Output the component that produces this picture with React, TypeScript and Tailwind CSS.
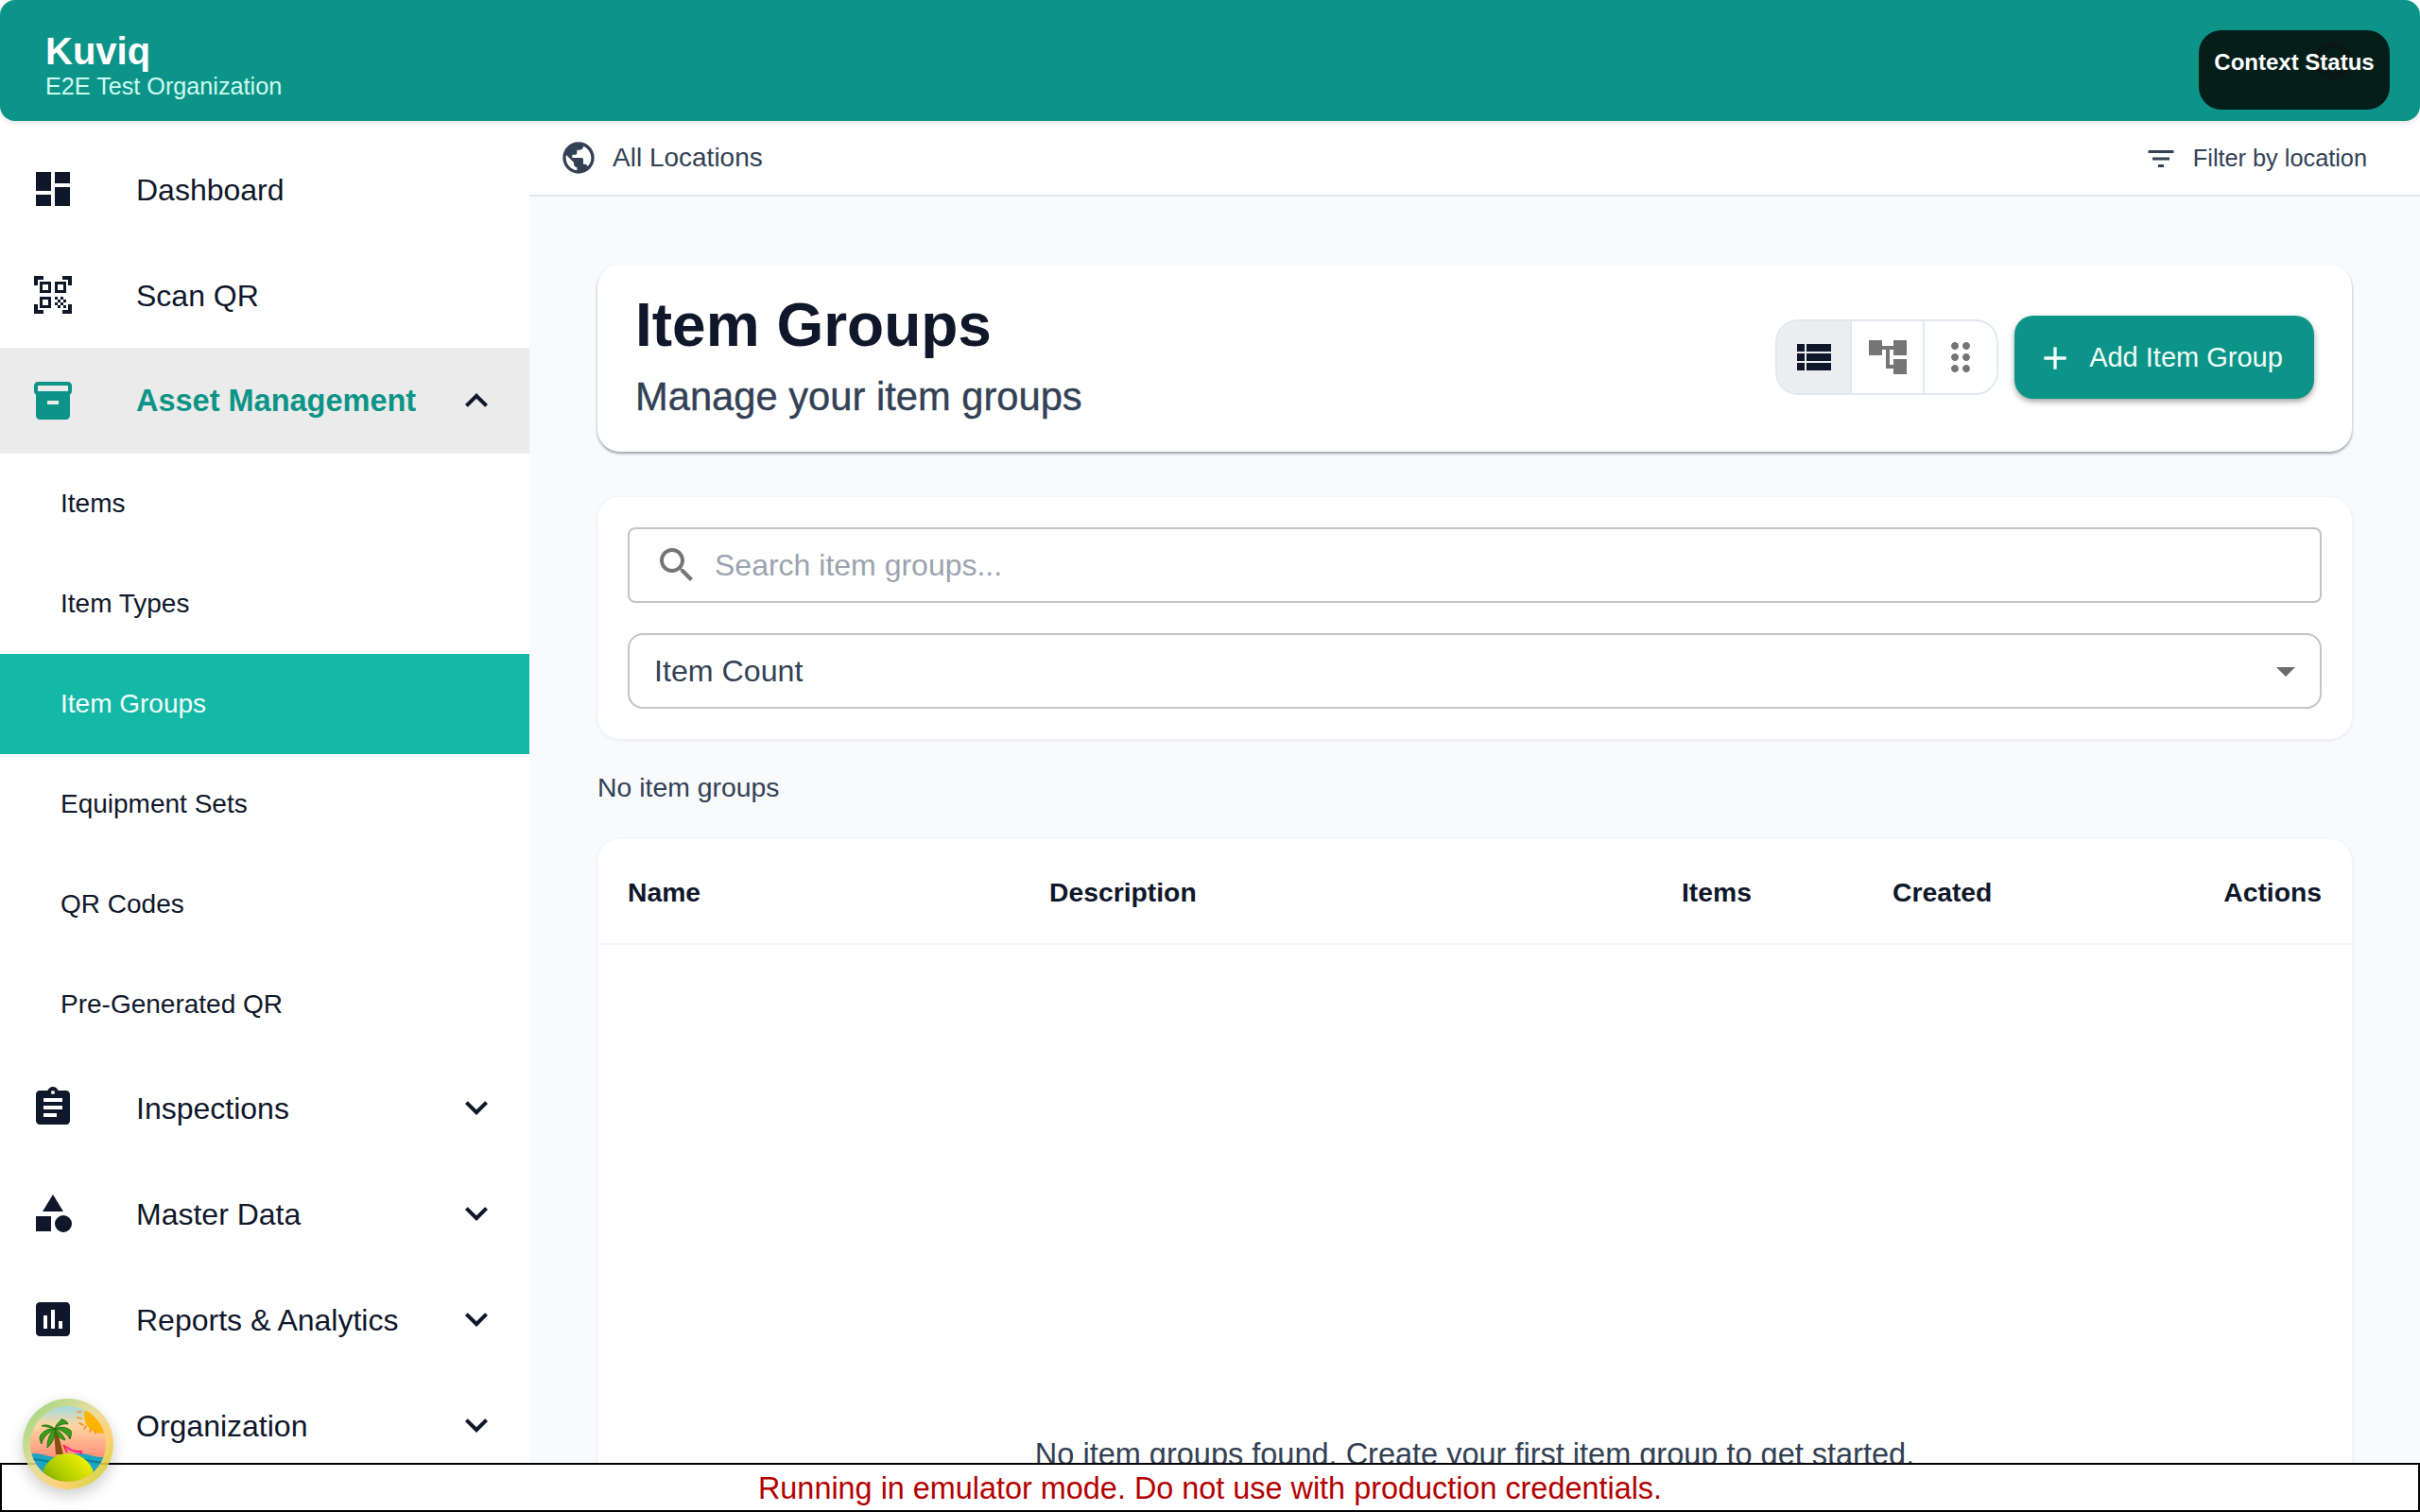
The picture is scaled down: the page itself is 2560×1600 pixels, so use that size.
const paths = {
  dashboard: 'M3 13h8V3H3v10zm0 8h8v-6H3v6zm10 0h8V11h-8v10zm0-18v6h8V3h-8z',
  qr: 'M9.5 6.5v3h-3v-3h3M11 5H5v6h6V5zm-1.5 9.5v3h-3v-3h3M11 13H5v6h6v-6zm6.5-6.5v3h-3v-3h3M19 5h-6v6h6V5zm-6 8h1.5v1.5H13V13zm1.5 1.5H16V16h-1.5v-1.5zM16 13h1.5v1.5H16V13zm-3 3h1.5v1.5H13V16zm1.5 1.5H16V19h-1.5v-1.5zM16 16h1.5v1.5H16V16zm1.5-1.5H19V16h-1.5v-1.5zm0 3H19V19h-1.5v-1.5zM22 7h-2V4h-3V2h5v5zm0 15v-5h-2v3h-3v2h5zM2 22h5v-2H4v-3H2v5zM2 2v5h2V4h3V2H2z',
  inventory: 'M20 2H4c-1 0-2 .9-2 2v3.01c0 .72.43 1.34 1 1.69V20c0 1.1 1.1 2 2 2h14c.9 0 2-.9 2-2V8.7c.57-.35 1-.97 1-1.69V4c0-1.1-1-2-2-2zm-5 12H9v-2h6v2zm5-7H4V4h16v3z',
  assignment: 'M19 3h-4.18C14.4 1.84 13.3 1 12 1c-1.3 0-2.4.84-2.82 2H5c-1.1 0-2 .9-2 2v14c0 1.1.9 2 2 2h14c1.1 0 2-.9 2-2V5c0-1.1-.9-2-2-2zm-7 0c.55 0 1 .45 1 1s-.45 1-1 1-1-.45-1-1 .45-1 1-1zm2 14H7v-2h7v2zm3-4H7v-2h10v2zm0-4H7V7h10v2z',
  category: 'M12 2l-5.5 9h11zM17.5 13a4.5 4.5 0 1 0 0 9 4.5 4.5 0 0 0 0-9zM3 13.5h8v8H3z',
  assessment: 'M19 3H5c-1.1 0-2 .9-2 2v14c0 1.1.9 2 2 2h14c1.1 0 2-.9 2-2V5c0-1.1-.9-2-2-2zM9 17H7v-7h2v7zm4 0h-2V7h2v10zm4 0h-2v-4h2v4z',
  less: 'M12 8l-6 6 1.41 1.41L12 10.83l4.59 4.58L18 14z',
  more: 'M16.59 8.59L12 13.17 7.41 8.59 6 10l6 6 6-6z',
  globe: 'M12 2C6.48 2 2 6.48 2 12s4.48 10 10 10 10-4.48 10-10S17.52 2 12 2zm-1 17.93c-3.95-.49-7-3.85-7-7.93 0-.62.08-1.21.21-1.79L9 15v1c0 1.1.9 2 2 2v1.93zm6.9-2.54c-.26-.81-1-1.39-1.9-1.39h-1v-3c0-.55-.45-1-1-1H8v-2h2c.55 0 1-.45 1-1V7h2c1.1 0 2-.9 2-2v-.41c2.93 1.19 5 4.06 5 7.41 0 2.08-.8 3.97-2.1 5.39z',
  filter: 'M10 18h4v-2h-4v2zM3 6v2h18V6H3zm3 7h12v-2H6v2z',
  list: 'M3 14h4v-4H3v4zm0 5h4v-4H3v4zM3 9h4V5H3v4zm5 5h13v-4H8v4zm0 5h13v-4H8v4zM8 5v4h13V5H8z',
  tree: 'M22 11V3h-7v3H9V3H2v8h7V8h2v10h4v3h7v-8h-7v3h-2V8h2v3z',
  drag: 'M11 18c0 1.1-.9 2-2 2s-2-.9-2-2 .9-2 2-2 2 .9 2 2zm-2-8c-1.1 0-2 .9-2 2s.9 2 2 2 2-.9 2-2-.9-2-2-2zm0-6c-1.1 0-2 .9-2 2s.9 2 2 2 2-.9 2-2-.9-2-2-2zm6 4c1.1 0 2-.9 2-2s-.9-2-2-2-2 .9-2 2 .9 2 2 2zm0 2c-1.1 0-2 .9-2 2s.9 2 2 2 2-.9 2-2-.9-2-2-2zm0 6c-1.1 0-2 .9-2 2s.9 2 2 2 2-.9 2-2-.9-2-2-2z',
  plus: 'M19 13h-6v6h-2v-6H5v-2h6V5h2v6h6v2z',
  search: 'M15.5 14h-.79l-.28-.27C15.41 12.59 16 11.11 16 9.5 16 5.91 13.09 3 9.5 3S3 5.91 3 9.5 5.91 16 9.5 16c1.61 0 3.09-.59 4.23-1.57l.27.28v.79l5 4.99L20.49 19l-4.99-5zm-6 0C7.01 14 5 11.99 5 9.5S7.01 5 9.5 5 14 7.01 14 9.5 11.99 14 9.5 14z',
  arrow: 'M7 10l5 5 5-5z',
};

function Icon({ d, className }: { d: string; className: string }) {
  return (
    <svg viewBox="0 0 24 24" fill="currentColor" className={`shrink-0 ${className}`}>
      <path d={d} />
    </svg>
  );
}

function NavItem({ icon, label, chevron, active }: { icon?: string; label: string; chevron?: string; active?: boolean }) {
  return (
    <div className={`flex h-[112px] items-center pl-[32px] pr-[32px] ${active ? 'bg-[#ebebeb]' : ''}`}>
      {/* the Organization icon sits under the avatar, so it only holds the space */}
      {icon ? (
        <Icon d={icon} className={`h-[48px] w-[48px] ${active ? 'text-[#0d9488]' : 'text-[#0f172a]'}`} />
      ) : (
        <div className="h-[48px] w-[48px] shrink-0" />
      )}
      <span className={`ml-[64px] flex-1 pt-[1px] ${active ? 'text-[32.5px] font-bold text-[#0d9488]' : 'text-[32px] text-[#0f172a]'}`}>{label}</span>
      {chevron && <Icon d={chevron} className="h-[48px] w-[48px] text-[#0f172a]" />}
    </div>
  );
}

function SubItem({ label, active }: { label: string; active?: boolean }) {
  return (
    <div className={`flex h-[106px] items-center pl-[64px] text-[28px] ${active ? 'bg-[#14b8a6] text-[#f0fdfa]' : 'text-[#0f172a]'}`}>
      {label}
    </div>
  );
}

function Avatar() {
  return (
    <div className="fixed bottom-[24px] left-[24px] h-[96px] w-[96px] rounded-full shadow-[0_6px_16px_rgba(0,0,0,0.2)]">
      <svg viewBox="0 0 96 96" className="h-full w-full">
        <defs>
          <linearGradient id="ring" x1="0" y1="0" x2="1" y2="1">
            <stop offset="0" stopColor="#7fd06a" />
            <stop offset="0.45" stopColor="#e6d890" />
            <stop offset="0.7" stopColor="#ffc860" />
            <stop offset="1" stopColor="#a6d810" />
          </linearGradient>
          <linearGradient id="sky" x1="0" y1="0" x2="0" y2="1">
            <stop offset="0" stopColor="#7fdcf5" />
            <stop offset="0.3" stopColor="#ffd6a0" />
            <stop offset="0.65" stopColor="#ff8f7a" />
          </linearGradient>
          <linearGradient id="hill" x1="1" y1="0" x2="0" y2="1">
            <stop offset="0.1" stopColor="#f8f400" />
            <stop offset="0.55" stopColor="#a8c800" />
            <stop offset="1" stopColor="#1f7a08" />
          </linearGradient>
          <clipPath id="inner">
            <circle cx="48" cy="48" r="40" />
          </clipPath>
        </defs>
        <circle cx="48" cy="48" r="48" fill="url(#ring)" opacity="0.88" />
        <g clipPath="url(#inner)">
          <rect x="0" y="0" width="96" height="96" fill="url(#sky)" />
          <circle cx="84" cy="18" r="19" fill="#ffb300" />
          <g stroke="#ff8a1e" strokeWidth="1.6" strokeLinecap="round">
            <path d="M58 14h4M58 20l4 1M60 26l4 2M65 32l2-3M71 35l1-3M77 37v-3" />
          </g>
          <path d="M0 60q12-4 24 0t24 0 24 0 24 0v20H0z" fill="#1ba6c2" />
          <path d="M0 66q12-3 24 0t24 0 24 0 24 0" stroke="#0a7f99" strokeWidth="2" fill="none" />
          <path d="M33 35l4 0 6 24h-8z" fill="#8a4d10" />
          <g fill="#3a9e1a" stroke="#1d6b0a" strokeWidth="0.9">
            <path d="M34 32c-5-4-10-5-14-3 4 0 6 1 14 3z" />
            <path d="M34 32c-7-1-14 3-16 9 0 3 1 5 2 7 1-7 7-12 14-16z" />
            <path d="M34 32c-4 3-8 9-8 20 5-4 9-12 8-20z" />
            <path d="M34 32c1-4 4-8 8-9l-2-1c4 0 7 2 8 5-5-1-10 1-14 5z" />
            <path d="M34 32c6-3 13-2 17 2 1 3 0 6-1 9-3-6-8-10-16-11z" />
            <path d="M34 32c4 2 9 6 11 12-5-1-10-6-11-12z" />
          </g>
          <path d="M43 49l4 8M43 49c6 6 12 7 19 7M62 55v4" stroke="#ff1f3d" strokeWidth="1.6" fill="none" />
          <path d="M46 51c6 5 11 6 17 6" stroke="#ff2a9e" strokeWidth="2" fill="none" />
          <ellipse cx="48" cy="85" rx="28" ry="27" fill="url(#hill)" />
        </g>
      </svg>
    </div>
  );
}

export default function App() {
  return (
    <div className="h-[1600px] w-[2560px] overflow-hidden bg-white font-['Liberation_Sans',Arial,sans-serif]">
      <header className="relative z-10 flex h-[128px] justify-between rounded-[16px] bg-[#0d9488] pl-[48px] pr-[32px] shadow-[0_2px_6px_rgba(0,0,0,0.12)]">
        <div className="flex flex-col pt-[32px]">
          <div className="text-[40px] leading-[44px] font-bold text-white">Kuviq</div>
          <div className="text-[25.2px] leading-[30px] text-[#ccfbf1]">E2E Test Organization</div>
        </div>
        <button className="relative mt-[32px] flex h-[84px] w-[202px] items-start justify-center rounded-[24px] bg-[#041e1a] pt-[16px] text-[24px] leading-[36px] font-bold text-white">
          <span className="absolute left-[122px] top-[12px] h-[40px] w-[40px] rounded-full border-[7px] border-[#0b1714]" />
          <span className="relative block">Context Status</span>
        </button>
      </header>

      <div className="flex h-[1472px]">
        <aside className="w-[560px] shrink-0 pt-[16px]">
          <NavItem icon={paths.dashboard} label="Dashboard" />
          <NavItem icon={paths.qr} label="Scan QR" />
          <NavItem icon={paths.inventory} label="Asset Management" chevron={paths.less} active />
          <SubItem label="Items" />
          <SubItem label="Item Types" />
          <SubItem label="Item Groups" active />
          <SubItem label="Equipment Sets" />
          <SubItem label="QR Codes" />
          <SubItem label="Pre-Generated QR" />
          <NavItem icon={paths.assignment} label="Inspections" chevron={paths.more} />
          <NavItem icon={paths.category} label="Master Data" chevron={paths.more} />
          <NavItem icon={paths.assessment} label="Reports & Analytics" chevron={paths.more} />
          <NavItem label="Organization" chevron={paths.more} />
        </aside>

        <main className="flex-1 overflow-hidden bg-[#f8fafc]">
          <div className="flex h-[80px] items-center justify-between border-b-2 border-[#e2e8f0] bg-white pl-[32px] pr-[56px]">
            <div className="flex items-center gap-[16px]">
              <Icon d={paths.globe} className="h-[40px] w-[40px] text-[#334155]" />
              <span className="text-[28px] text-[#334155]">All Locations</span>
            </div>
            <div className="flex items-center gap-[16px] pt-[1px]">
              <Icon d={paths.filter} className="h-[36px] w-[36px] text-[#334155]" />
              <span className="text-[25.3px] text-[#334155]">Filter by location</span>
            </div>
          </div>

          <div className="px-[72px] pt-[72px]">
            <section className="flex h-[198px] items-center justify-between rounded-[24px] bg-white pl-[40px] pr-[40px] shadow-[0_2px_3px_rgba(15,23,42,0.4)]">
              <div className="pb-[5px]">
                <h1 className="text-[64px] leading-[76px] font-bold text-[#0f172a]">Item Groups</h1>
                <p className="mt-[11px] text-[41.7px] leading-[54px] text-[#334155] [-webkit-text-stroke:0.4px_#334155]">Manage your item groups</p>
              </div>
              <div className="-mt-[2px] flex items-center gap-[17px]">
                <div className="flex h-[80px] w-[236px] overflow-hidden rounded-[24px] border-2 border-[#e2e8f0]">
                  <div className="flex w-[77px] items-center justify-center bg-[#ebedf0]">
                    <Icon d={paths.list} className="h-[48px] w-[48px] text-[#0f172a]" />
                  </div>
                  <div className="flex flex-1 items-center justify-center border-x-2 border-[#e2e8f0]">
                    <Icon d={paths.tree} className="h-[48px] w-[48px] text-[#757575]" />
                  </div>
                  <div className="flex w-[76px] items-center justify-center">
                    <Icon d={paths.drag} className="h-[48px] w-[48px] text-[#757575]" />
                  </div>
                </div>
                <button className="flex h-[88px] w-[317px] items-center justify-center gap-[16px] rounded-[20px] bg-[#0d9488] pr-[10px] pt-[2px] text-[29px] text-[#f0fdfa] shadow-[0_3px_6px_rgba(0,0,0,0.35)]">
                  <Icon d={paths.plus} className="h-[40px] w-[40px]" />
                  Add Item Group
                </button>
              </div>
            </section>

            <section className="mt-[48px] flex flex-col gap-[32px] rounded-[24px] bg-white p-[32px] shadow-[0_1px_4px_rgba(15,23,42,0.08)]">
              <div className="flex h-[80px] items-center rounded-[8px] border-2 border-[#c4c4c4] pl-[26px]">
                <Icon d={paths.search} className="h-[48px] w-[48px] text-[#757575]" />
                <span className="ml-[16px] text-[32px] text-[#9ca3af]">Search item groups...</span>
              </div>
              <div className="flex h-[80px] items-center justify-between rounded-[16px] border-2 border-[#c4c4c4] pl-[26px] pr-[12px]">
                <span className="text-[32.2px] text-[#334155]">Item Count</span>
                <Icon d={paths.arrow} className="h-[48px] w-[48px] text-[#6b6b6b]" />
              </div>
            </section>

            <p className="mb-[34px] mt-[30px] text-[28.4px] leading-[42px] text-[#334155]">No item groups</p>

            <section className="h-[800px] rounded-[24px] bg-white shadow-[0_1px_4px_rgba(15,23,42,0.08)]">
              <div className="grid h-[112px] grid-cols-[446px_669px_223px_1fr_auto] items-center border-b-2 border-[#f5f6f8] px-[32px] pt-[2px] text-[28.3px] font-bold text-[#0f172a]">
                <span>Name</span>
                <span>Description</span>
                <span>Items</span>
                <span>Created</span>
                <span>Actions</span>
              </div>
              <p className="pt-[515px] text-center text-[32.5px] leading-[48px] text-[#334155]">
                No item groups found. Create your first item group to get started.
              </p>
            </section>
          </div>
        </main>
      </div>

      <div className="fixed bottom-0 left-0 flex h-[52px] w-full items-center justify-center border-2 border-black bg-white pt-[2px] text-[32.4px] text-[#b30000]">
        Running in emulator mode. Do not use with production credentials.
      </div>
      <Avatar />
    </div>
  );
}
